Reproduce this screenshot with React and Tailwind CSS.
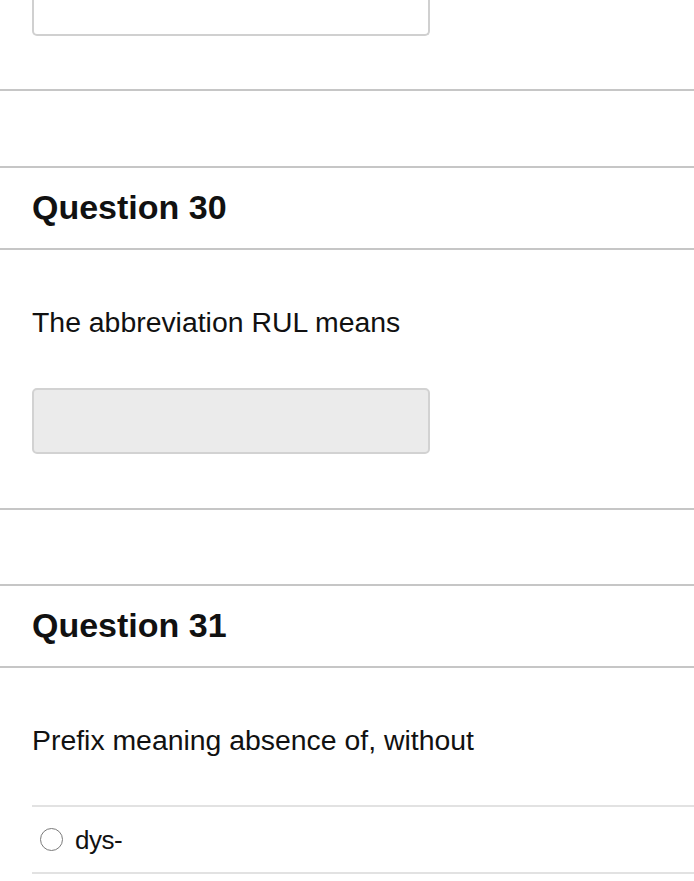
import React from 'react'

const Rule = () => <div className="h-[2px] bg-[#c6c6c6]" />

function QuestionHeader({ number }) {
  return (
    <div className="h-[80px] flex items-center px-[32px] pb-[3px]">
      <h2 className="text-[34px] font-bold text-[#111] leading-none">Question {number}</h2>
    </div>
  )
}

export default function App() {
  return (
    <div className="w-[694px] h-[881px] overflow-hidden bg-white text-[#111]" style={{ fontFamily: '"Liberation Sans", Arial, sans-serif' }}>
      {/* previous question's answer box, cut off at the top */}
      <div className="px-[32px]">
        <div className="w-[398px] h-[36px] bg-white border-2 border-t-0 border-[#d0d0d0] rounded-b-[5px]" />
      </div>
      <div className="h-[53px]" />
      <Rule />
      <div className="h-[75px]" />
      <Rule />

      <QuestionHeader number={30} />
      <Rule />
      <div className="px-[32px] pt-[55px] pb-[54px]">
        <p className="text-[28.4px] leading-[34px]">The abbreviation RUL means</p>
        <div className="mt-[49px] w-[398px] h-[66px] bg-[#ebebeb] border-2 border-[#d2d2d2] rounded-[5px]" />
      </div>
      <Rule />
      <div className="h-[74px]" />
      <Rule />

      <QuestionHeader number={31} />
      <Rule />
      <div className="pl-[32px] pt-[55px]">
        <p className="text-[28.4px] leading-[34px]">Prefix meaning absence of, without</p>
        <div className="mt-[48px] h-[2px] bg-[#e2e2e2]" />
        <label className="h-[65px] flex items-center gap-[12px] pl-[8px]">
          <span className="w-[23px] h-[23px] rounded-full border-[1.5px] border-[#7a7a7a] bg-white" />
          <span className="text-[26px] leading-none tracking-[-0.5px]">dys-</span>
        </label>
        <div className="h-[2px] bg-[#e2e2e2]" />
      </div>
    </div>
  )
}
